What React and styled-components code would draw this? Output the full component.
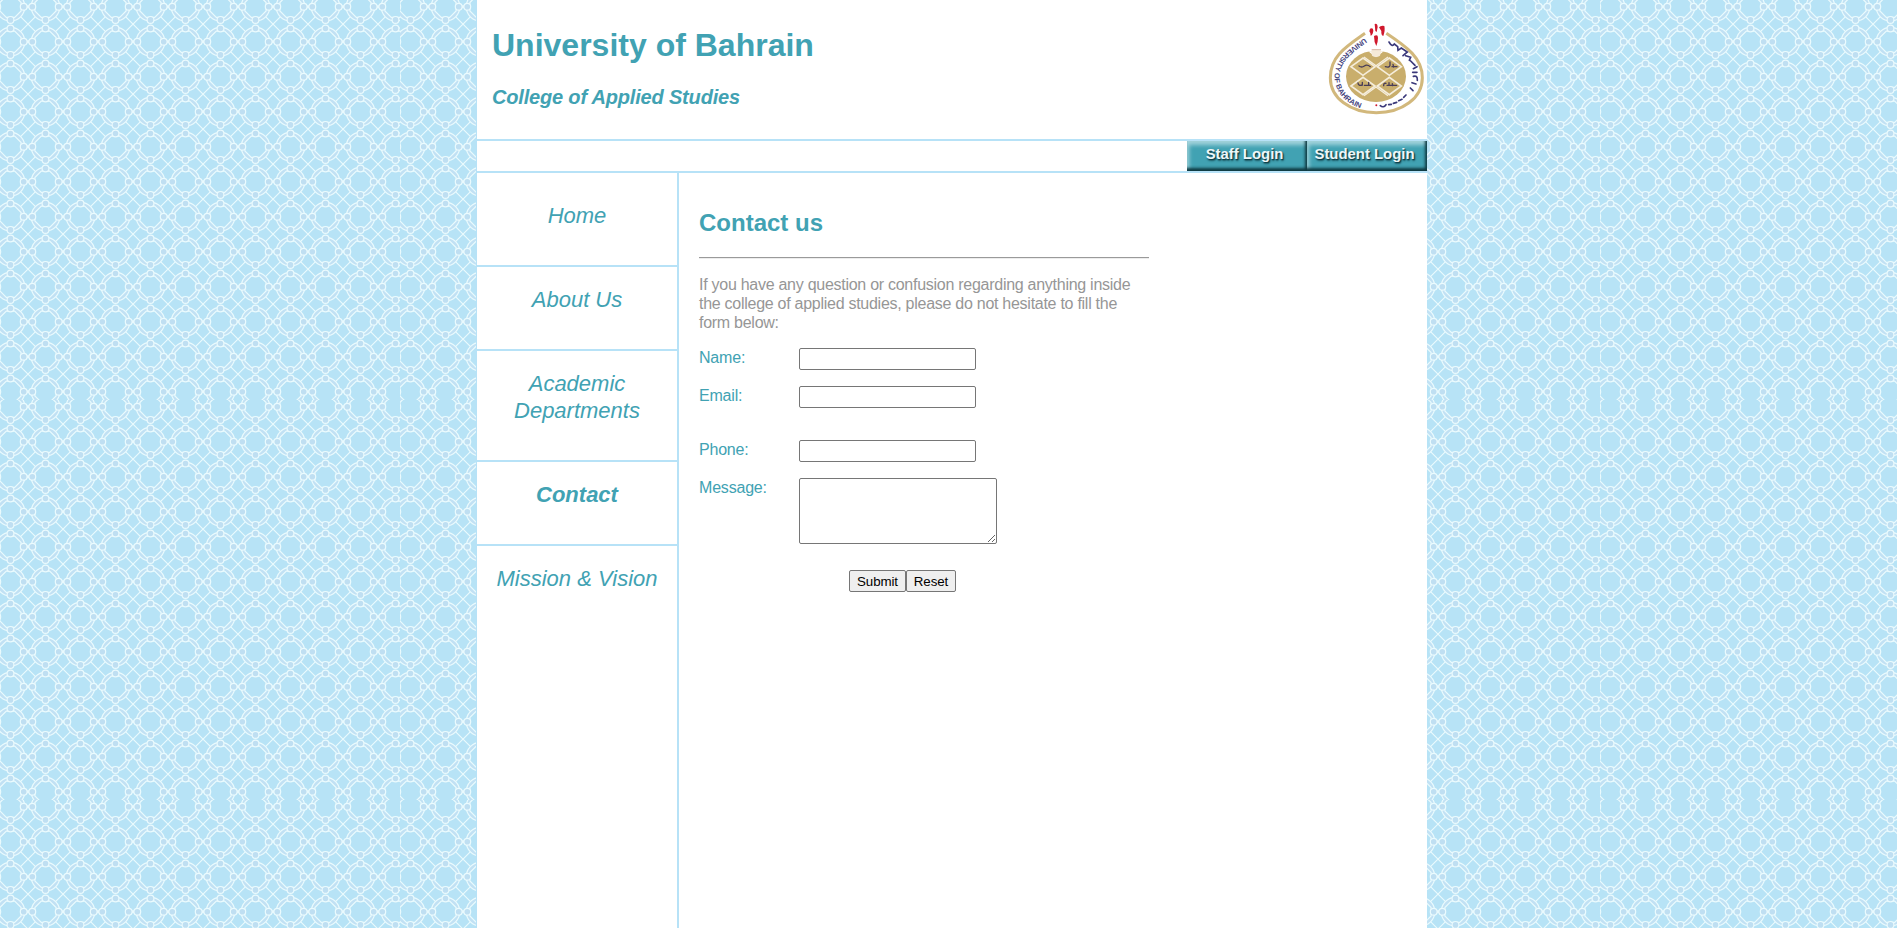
import React from "react";
import styled, { createGlobalStyle, css } from "styled-components";

const TEAL = "#41a2b3";
const SKY = "#b7e2f7";

/* 400px square tile: a lattice of linked rings with a 35px period */
const latticeTile = (() => {
  const rings = [];
  for (let row = -1; row < 13; row++) {
    for (let col = -1; col < 13; col++) {
      rings.push(`<use href="#c" x="${10.5 + col * 35}" y="${6.7 + row * 35}"/>`);
    }
  }
  const cell =
    '<g id="c" fill="none" stroke="#ebfbfe" stroke-width="1.2">' +
    '<path d="M17.5 17.5L10 10M-17.5 17.5L-10 10M17.5 -17.5L10 -10M-17.5 -17.5L-10 -10"/>' +
    '<path d="M15.5 -2L17.5 0L15.5 2M-15.5 -2L-17.5 0L-15.5 2"/>' +
    '<circle r="14.3" fill="#c1e1f4"/>' +
    '<path d="M4.2 -10.6L10.6 -4.2V4.2L4.2 10.6H-4.2L-10.6 4.2V-4.2L-4.2 -10.6Z" fill="#b7e3f6"/>' +
    '<g fill="#bfdff2"><circle cy="-13.2" r="3.4"/><circle cy="13.2" r="3.4"/><circle cx="-13.2" r="3.4"/><circle cx="13.2" r="3.4"/></g></g>';
  const svg =
    '<svg xmlns="http://www.w3.org/2000/svg" width="400" height="400">' +
    `<defs>${cell}</defs><rect width="400" height="400" fill="#b7e3f6"/>${rings.join("")}</svg>`;
  return `url("data:image/svg+xml,${encodeURIComponent(svg)}")`;
})();

const GlobalStyle = createGlobalStyle`
  html, body { margin: 0; padding: 0; }
  body {
    background-image: ${latticeTile};
    background-color: #b7e3f6;
    font-family: "Liberation Sans", Arial, sans-serif;
    font-size: 16px;
    overflow: hidden;
  }
`;

const Page = styled.div`
  box-sizing: border-box;
  width: 951px;
  height: 928px;
  margin-left: 476px;
  border-left: 1px solid ${SKY};
  background: #fff;
  display: flex;
  flex-direction: column;
`;

const Header = styled.header`
  box-sizing: border-box;
  height: 141px;
  padding-left: 15px;
  border-bottom: 2px solid ${SKY};
  display: flex;
  justify-content: space-between;
  color: ${TEAL};
`;

const Title = styled.h1`
  margin: 27px 0 0;
  font-size: 32px;
  line-height: 36px;
`;

const Subtitle = styled.h2`
  margin: 22px 0 0;
  font-size: 20px;
  line-height: 24px;
  font-style: italic;
  letter-spacing: -0.18px;
`;

const Emblem = styled.svg`
  width: 100px;
  height: 100px;
  margin-top: 20px;
`;

const LoginBar = styled.div`
  height: 30px;
  border-bottom: 2px solid ${SKY};
  display: flex;
  justify-content: flex-end;
`;

const LoginButton = styled.a`
  box-sizing: border-box;
  width: 120px;
  height: 30px;
  padding-right: 5px;
  background: ${TEAL};
  box-shadow: inset -2px -3px 3px 0 #0f3a42, inset 3px 5px 4px -1px #a3d3db;
  color: #edf7f9;
  font-size: 14.9px;
  font-weight: bold;
  line-height: 27px;
  text-align: center;
  white-space: nowrap;
  text-shadow: 1px 1px 1px #0d3a42, 1px 2px 2px #1c5660;
`;

const Body = styled.div`
  flex: 1;
  display: flex;
`;

const Sidebar = styled.nav`
  width: 200px;
  border-right: 2px solid ${SKY};
  color: ${TEAL};
`;

const NavItem = styled.a`
  box-sizing: border-box;
  display: block;
  padding: ${(p) => (p.$first ? 29 : 19)}px 20px 36px;
  font-size: 22px;
  line-height: 27px;
  font-style: italic;
  text-align: center;
  ${(p) => p.$active && css`font-weight: bold;`}
  ${(p) => p.$flush && css`padding-left: 0; padding-right: 0;`}
  &:not(:last-child) { border-bottom: 2px solid ${SKY}; }
`;

const Content = styled.main`
  width: 450px;
  padding-left: 20px;
`;

const Heading = styled.h2`
  margin: 36px 0 20px;
  font-size: 24px;
  line-height: 28px;
  color: ${TEAL};
`;

const Rule = styled.hr`
  margin: 0;
  border: 0;
  border-top: 1px solid #9a9a9a;
  border-bottom: 1px solid #ededed;
`;

const Intro = styled.p`
  margin: 16px 0;
  padding-right: 14px;
  color: #969696;
  line-height: 19px;
  letter-spacing: -0.27px;
`;

const Field = styled.label`
  display: flex;
  align-items: flex-start;
  margin-bottom: ${(p) => p.$gap || 16}px;
  color: ${TEAL};
  line-height: 19px;
  letter-spacing: -0.2px;
`;

const Caption = styled.span`
  width: 100px;
`;

const controlFrame = css`
  box-sizing: border-box;
  margin: 0;
  border: 1px solid #767676;
  border-radius: 2px;
  background: #fff;
  outline: 0;
`;

const TextInput = styled.input`
  ${controlFrame}
  width: 177px;
  height: 22px;
`;

const MessageBox = styled.textarea`
  ${controlFrame}
  width: 198px;
  height: 66px;
  resize: both;
`;

const Actions = styled.div`
  display: flex;
  padding-left: 150px;
`;

const FormButton = styled.button`
  box-sizing: border-box;
  width: ${(p) => p.$width}px;
  height: 22px;
  margin: 0;
  padding: 0;
  border: 1px solid #767676;
  border-radius: 2px;
  background: #efefef;
  color: #000;
  font: 13.333px "Liberation Sans", Arial, sans-serif;
  letter-spacing: -0.1px;
`;

const NAV = [
  { label: "Home" },
  { label: "About Us" },
  { label: "Academic Departments" },
  { label: "Contact", active: true },
  { label: "Mission & Vision", flush: true },
];

const FIELDS = [
  { label: "Name:" },
  { label: "Email:", gap: 32 },
  { label: "Phone:" },
];

const DIAMONDS = [
  [159, 170],
  [238, 170],
  [159, 228],
  [238, 228],
];

function UniversityEmblem() {
  return (
    <Emblem viewBox="51 30 300 300" role="img" aria-label="University crest">
      <defs>
        <path id="ringLeft" d="M164 84C110 121 74 150 74 202C74 254 125 300 190 300" />
        <clipPath id="disc"><ellipse cx="198" cy="199" rx="90" ry="77" /></clipPath>
      </defs>
      <path
        d="M165 70C105 112 61 140 61 203C61 264 121 308 199 308C277 308 337 264 337 203C337 144 292 112 229 70"
        fill="none" stroke="#d2b87c" strokeWidth="9"
      />
      <g clipPath="url(#disc)">
        <rect x="100" y="115" width="200" height="170" fill="#c9ae6c" />
        <path d="M152 106L244 106L198 142Z" fill="#fff" />
        {DIAMONDS.map(([x, y]) => (
          <path
            key={`${x}-${y}`}
            d={`M${x - 36} ${y}L${x} ${y - 26}L${x + 36} ${y}L${x} ${y + 26}Z`}
            fill="#c9ae6c" stroke="#f5eddb" strokeWidth="5"
          />
        ))}
        <path d="M162 141L198 167L234 141M162 257L198 231L234 257" fill="none" stroke="#f5eddb" strokeWidth="4" />
      </g>
      <path d="M183 122Q198 112 214 122L210 137Q198 145 186 137Z" fill="#f5ead8" />
      <path d="M185 119H213" stroke="#d9b7a8" strokeWidth="3" />
      <g fill="none" stroke="#493d57" strokeWidth="4" strokeLinecap="round">
        <path d="M147 168Q155 174 163 168T181 170M226 170Q238 174 240 166V156M246 170H261M249 163L251 171" />
        <path d="M144 219Q145 229 157 225V217M163 226H182M176 217V226M221 227Q221 218 228 220M231 226H260M237 218V226M247 221L248 227" />
      </g>
      <g fill="#d0182d">
        <path d="M180 56Q190 52 190 62Q188 76 182 77Q183 70 178 64Z" />
        <path d="M194 42Q202 38 203 51L200 66L196 63Z" />
        <path d="M207 52Q212 46 223 48Q226 60 220 78Q213 77 214 63Z" />
        <path d="M192 78Q204 72 204 83Q204 95 199 108Q192 96 192 78Z" />
        <circle cx="199" cy="286" r="3" />
      </g>
      <text fill="#45437c" fontFamily="Liberation Sans, sans-serif" fontWeight="bold" fontSize="22">
        <textPath href="#ringLeft" textLength="284" lengthAdjust="spacingAndGlyphs">UNIVERSITY OF BAHRAIN</textPath>
      </text>
      <path
        d="M237 96Q246 112 253 102L263 110L264 121L274 114L292 126L279 137M287 137L302 142L298 151M302 153L315 166M310 176L321 170M308 187L321 187M310 199Q323 195 322 211M306 218L318 222M301 234L309 242M281 262L288 255M266 272L276 268M250 280L260 277M236 284L244 283M211 287Q220 295 228 284"
        fill="none" stroke="#3a387a" strokeWidth="5" strokeLinecap="round"
      />
    </Emblem>
  );
}

export default function App() {
  return (
    <>
      <GlobalStyle />
      <Page>
        <Header>
          <div>
            <Title>University of Bahrain</Title>
            <Subtitle>College of Applied Studies</Subtitle>
          </div>
          <UniversityEmblem />
        </Header>
        <LoginBar>
          <LoginButton>Staff Login</LoginButton>
          <LoginButton>Student Login</LoginButton>
        </LoginBar>
        <Body>
          <Sidebar>
            {NAV.map((item, i) => (
              <NavItem key={item.label} $first={i === 0} $active={item.active} $flush={item.flush}>
                {item.label}
              </NavItem>
            ))}
          </Sidebar>
          <Content>
            <Heading>Contact us</Heading>
            <Rule />
            <Intro>
              If you have any question or confusion regarding anything inside the college of applied
              studies, please do not hesitate to fill the form below:
            </Intro>
            {FIELDS.map((field) => (
              <Field key={field.label} $gap={field.gap}>
                <Caption>{field.label}</Caption>
                <TextInput type="text" />
              </Field>
            ))}
            <Field $gap={26}>
              <Caption>Message:</Caption>
              <MessageBox />
            </Field>
            <Actions>
              <FormButton $width={57}>Submit</FormButton>
              <FormButton $width={50}>Reset</FormButton>
            </Actions>
          </Content>
        </Body>
      </Page>
    </>
  );
}
